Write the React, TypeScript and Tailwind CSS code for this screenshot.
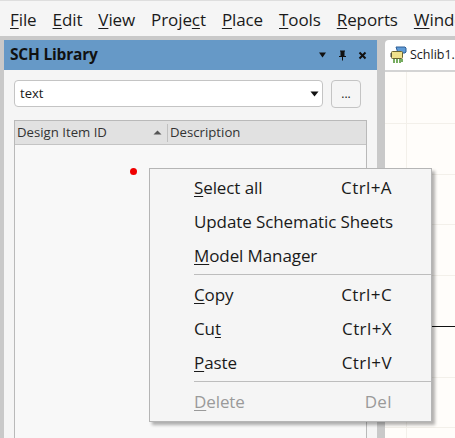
const MENU_ITEMS = [
    { pre: "", key: "F", post: "ile" },
    { pre: "", key: "E", post: "dit" },
    { pre: "", key: "V", post: "iew" },
    { pre: "Proje", key: "c", post: "t" },
    { pre: "", key: "P", post: "lace" },
    { pre: "", key: "T", post: "ools" },
    { pre: "", key: "R", post: "eports" },
    { pre: "", key: "W", post: "indow" },
];

function Mnemonic({ pre, k, post }: { pre: string; k: string; post: string }) {
    return (
        <span>
            {pre}
            <span className="underline decoration-1 underline-offset-2">{k}</span>
            {post}
        </span>
    );
}

function ContextRow({
    pre = "",
    k = "",
    post = "",
    shortcut,
    disabled,
}: {
    pre?: string;
    k?: string;
    post?: string;
    shortcut?: string;
    disabled?: boolean;
}) {
    return (
        <div
            className={`flex h-[34px] items-center justify-between whitespace-nowrap pl-[44px] pr-[39px] ${
                disabled ? "text-[#9a9a9a]" : "text-[#1a1a1a]"
            }`}>
            <Mnemonic pre={pre} k={k} post={post} />
            {shortcut && <span className="tracking-[0.4px]">{shortcut}</span>}
        </div>
    );
}

function ComponentIcon() {
    return (
        <svg width="17" height="18" viewBox="0 0 17 18" className="shrink-0">
            <path d="M6 1h9l1 1v4l-1 1H8z" fill="#5f9bd6" stroke="#2f5f96" strokeWidth="1" />
            <rect x="1.5" y="5.5" width="11" height="7" rx="1" fill="#efe08c" stroke="#6b6330" />
            <path d="M4 13v4M7 13v4M10 13v4M12 13v3" stroke="#3d8a1f" strokeWidth="1.4" />
            <path d="M0 8h2M0 10h2" stroke="#444" />
        </svg>
    );
}

export default function App() {
    return (
        <div
            className="relative h-[438px] w-[455px] overflow-hidden bg-[#c9c9c9] text-[#1a1a1a]"
            style={{ fontFamily: '"Open Sans", "Noto Sans", sans-serif' }}>
            {/* Menu bar */}
            <div className="flex h-[36px] items-end gap-[16px] overflow-hidden whitespace-nowrap border-t border-[#dedede] bg-[#f5f5f5] pb-[4px] pl-[10px] text-[17px] tracking-[-0.1px]">
                {MENU_ITEMS.map((item) => (
                    <Mnemonic key={item.key} pre={item.pre} k={item.key} post={item.post} />
                ))}
            </div>

            <div className="flex h-[402px] gap-[8px] pl-[4px] pt-[4px]">
                {/* SCH Library panel */}
                <div className="flex w-[373px] shrink-0 flex-col bg-[#f5f5f5]">
                    <div className="flex h-[30px] items-center justify-between bg-[#6699c7] pl-[6px] pr-[10px]">
                        <span className="text-[15.5px] font-bold tracking-[-0.2px] text-[#111111]">
                            SCH Library
                        </span>
                        <div className="flex items-center gap-[11px]">
                            <svg width="9" height="6" viewBox="0 0 9 6">
                                <path d="M1 0.5h7L4.5 5.5z" fill="#111" />
                            </svg>
                            <svg width="9" height="11" viewBox="0 0 9 11">
                                <path d="M2 0.5h5v1H6.5v4.5H8v1H5V10.5H4V7H1V6h1.5V1.5H2z" fill="#111" />
                            </svg>
                            <svg width="9" height="9" viewBox="0 0 9 9">
                                <path d="M1.5 1.5l6 6M7.5 1.5l-6 6" stroke="#111" strokeWidth="2" />
                            </svg>
                        </div>
                    </div>
                    <div className="flex flex-1 flex-col px-[10px] pt-[10px]">
                        <div className="flex gap-[8px]">
                            <div className="flex h-[27px] w-[309px] items-center justify-between rounded-[4px] border border-[#c4c4c4] bg-white pl-[5px] pr-[3px] text-[13px]">
                                <span>text</span>
                                <svg width="9" height="6" viewBox="0 0 9 6">
                                    <path d="M0.5 0.5h8L4.5 5.5z" fill="#111" />
                                </svg>
                            </div>
                            <div className="flex h-[28px] w-[30px] items-center justify-center rounded-[4px] border border-[#c4c4c4] bg-[#f5f5f5] text-[12px] leading-none">
                                ...
                            </div>
                        </div>
                        <div className="mt-[12px] flex flex-1 flex-col border-x border-t border-[#b9b9b9] bg-[#f8f8f8]">
                            <div className="flex h-[24px] items-center border-b border-[#c4c4c4] bg-[#e1e1e1] text-[13.2px] text-[#333333]">
                                <div className="flex h-[18px] w-[153px] items-center justify-between border-r border-[#c0c0c0] pl-[2px] pr-[5px]">
                                    <span>Design Item ID</span>
                                    <svg width="9" height="5" viewBox="0 0 9 5">
                                        <path d="M0.5 4.5h8L4.5 0.5z" fill="#555" />
                                    </svg>
                                </div>
                                <span className="pl-[2px]">Description</span>
                            </div>
                        </div>
                    </div>
                </div>

                {/* Document area */}
                <div className="flex flex-1 flex-col overflow-hidden">
                    <div className="flex h-[32px] items-center gap-[3px] rounded-tl-[4px] border-b-2 border-[#d4d4d4] bg-white pl-[5px] text-[12.5px] whitespace-nowrap">
                        <ComponentIcon />
                        <span>Schlib1.</span>
                    </div>
                    <div className="relative flex-1 bg-[#fffdfa]">
                        <svg width="70" height="366" viewBox="0 0 70 366" className="block">
                            <path d="M21.5 0v366M0 51.5h70M0 102.5h70M0 152.5h70M0 203.5h70M0 305.5h70M0 355.5h70" stroke="#f3f0ea" fill="none" />
                            <path d="M0 254.5h70" stroke="#111" />
                        </svg>
                    </div>
                </div>
            </div>

            {/* Selection marker */}
            <div className="absolute left-[130px] top-[168px] h-[7px] w-[7px] rounded-full bg-[#f00000]" />

            {/* Context menu */}
            <div className="absolute left-[149px] top-[168px] w-[283px] border border-[#b5b5b5] bg-[#f5f5f5] py-[2px] text-[17px] tracking-[-0.1px] shadow-[3px_3px_3px_rgba(0,0,0,0.3)]">
                <ContextRow k="S" post="elect all" shortcut="Ctrl+A" />
                <ContextRow pre="Update Schematic Sheets" />
                <ContextRow k="M" post="odel Manager" />
                <div className="my-[1px] ml-[44px] h-px bg-[#bdbdbd]" />
                <div className="h-[2px]" />
                <ContextRow k="C" post="opy" shortcut="Ctrl+C" />
                <ContextRow pre="Cu" k="t" shortcut="Ctrl+X" />
                <ContextRow k="P" post="aste" shortcut="Ctrl+V" />
                <div className="my-[1px] ml-[44px] h-px bg-[#bdbdbd]" />
                <div className="h-[2px]" />
                <ContextRow k="D" post="elete" shortcut="Del" disabled />
            </div>
        </div>
    );
}
